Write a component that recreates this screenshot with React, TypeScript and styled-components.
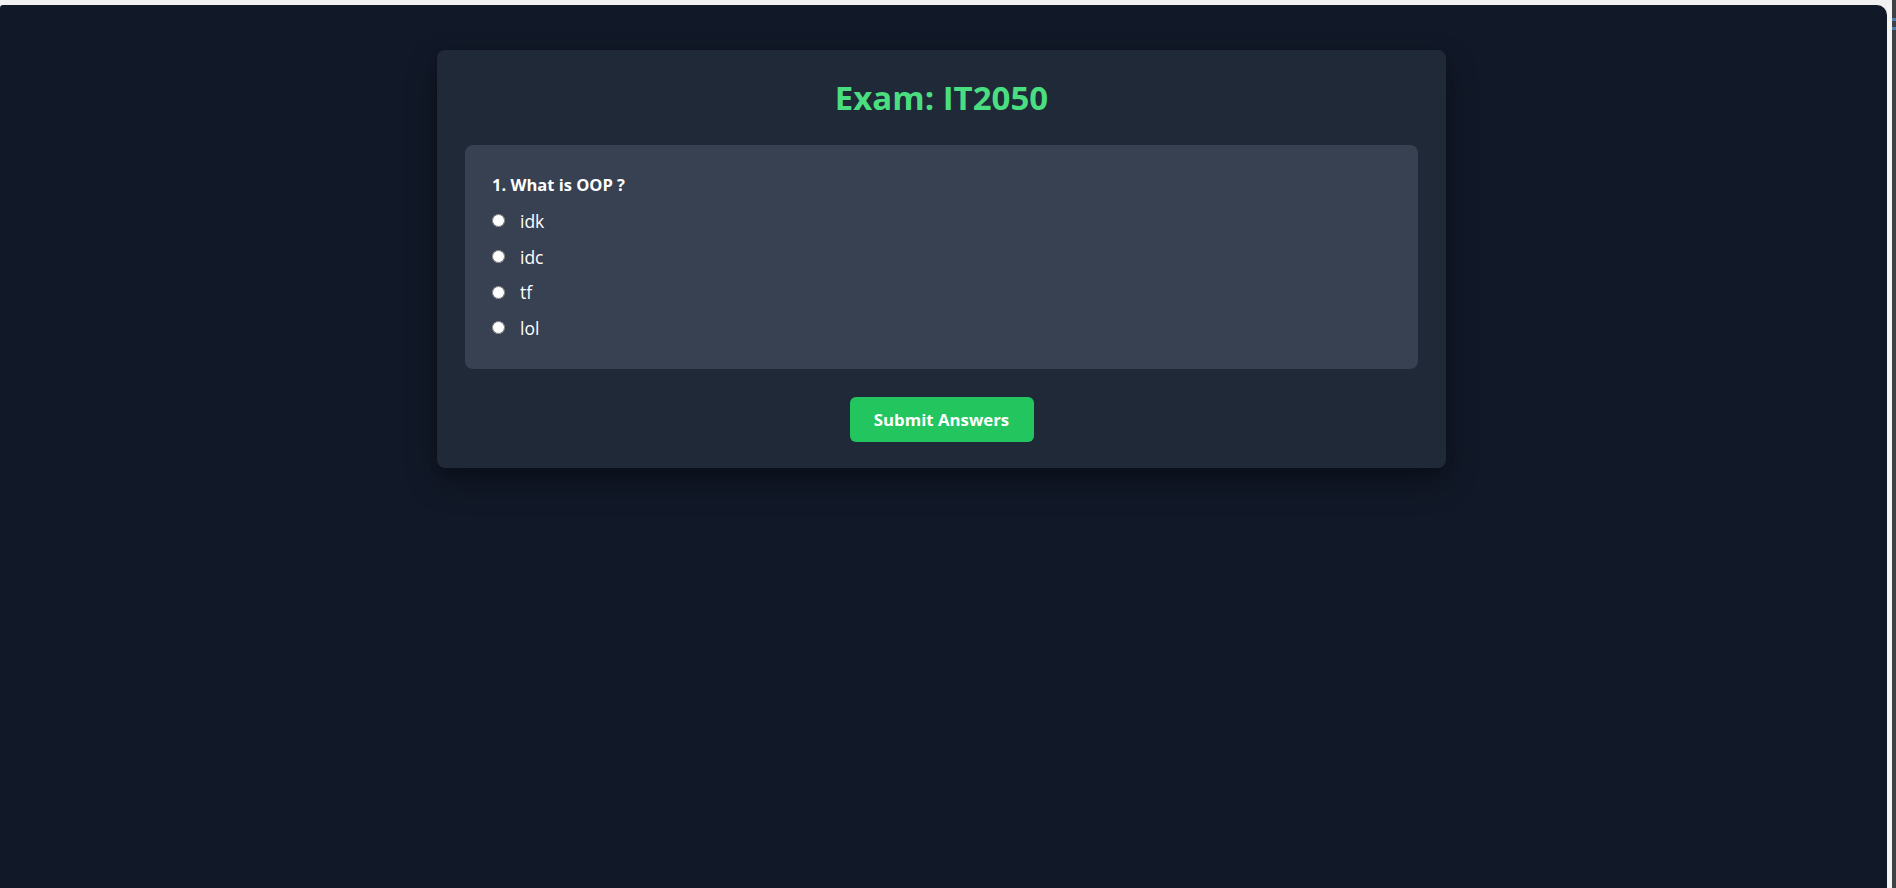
import React from "react";
import styled, { createGlobalStyle } from "styled-components";

const Global = createGlobalStyle`
  html, body { margin: 0; padding: 0; background: #f1f1f1; }
  body { font-family: "Open Sans", "Liberation Sans", sans-serif; }
  * { box-sizing: border-box; }
`;

const Frame = styled.div`
  display: flex;
  width: 1896px;
  height: 888px;
  padding-top: 5px;
  background: #f1f1f1;
  overflow: hidden;
`;

const Main = styled.main`
  width: 1887px;
  height: 883px;
  background: #111827;
  border-radius: 3px 10px 0 0;
  padding: 45px 4px 0 0;
  display: flex;
  justify-content: center;
  align-items: flex-start;
`;

const SideGap = styled.div`
  width: 5px;
  background: #f4f4f4;
`;

const SideBar = styled.div`
  width: 4px;
  margin-top: -5px;
  background: #3f4245;
  display: flex;
  flex-direction: column;
  gap: 6px;
  padding-top: 18px;
`;

const SideMark = styled.span`
  display: block;
  width: 4px;
  height: 3px;
  background: #4f7fae;
`;

const Card = styled.section`
  width: 1009px;
  background: #1f2937;
  border-radius: 8px;
  padding: 28px 28px 26px 28px;
  box-shadow: 0 14px 32px rgba(0, 0, 0, 0.3), 0 4px 10px rgba(0, 0, 0, 0.14);
`;

const Title = styled.h1`
  margin: 0 0 27px;
  text-align: center;
  color: #4ade80;
  font-size: 33px;
  line-height: 40px;
  font-weight: 700;
`;

const QuestionBox = styled.div`
  background: #374151;
  border-radius: 8px;
  padding: 28px 27px 26px;
  height: 224px;
`;

const QuestionText = styled.p`
  margin: 0 0 6px;
  color: #ffffff;
  font-size: 16.5px;
  line-height: 24px;
  font-weight: 700;
`;

const Option = styled.label`
  display: flex;
  align-items: center;
  height: 35.7px;
  color: #ffffff;
  font-size: 17.5px;
  cursor: pointer;
`;

const Radio = styled.input`
  width: 13px;
  height: 13px;
  margin: 0 15px 0 0;
  flex: none;
`;

const Actions = styled.div`
  display: flex;
  justify-content: center;
  padding-top: 28px;
`;

const SubmitButton = styled.button`
  width: 184px;
  height: 45px;
  border: none;
  border-radius: 6px;
  background: #22c55e;
  color: #ffffff;
  font-family: inherit;
  font-size: 16.8px;
  font-weight: 700;
  cursor: pointer;
`;

const options = ["idk", "idc", "tf", "lol"];

export default function App() {
  return (
    <>
      <Global />
      <Frame>
        <Main>
          <Card>
            <Title>Exam: IT2050</Title>
            <QuestionBox>
              <QuestionText>1. What is OOP ?</QuestionText>
              {options.map((o) => (
                <Option key={o}>
                  <Radio type="radio" name="q1" value={o} />
                  {o}
                </Option>
              ))}
            </QuestionBox>
            <Actions>
              <SubmitButton type="button">Submit Answers</SubmitButton>
            </Actions>
          </Card>
        </Main>
        <SideGap />
        <SideBar>
          <SideMark />
          <SideMark />
        </SideBar>
      </Frame>
    </>
  );
}
